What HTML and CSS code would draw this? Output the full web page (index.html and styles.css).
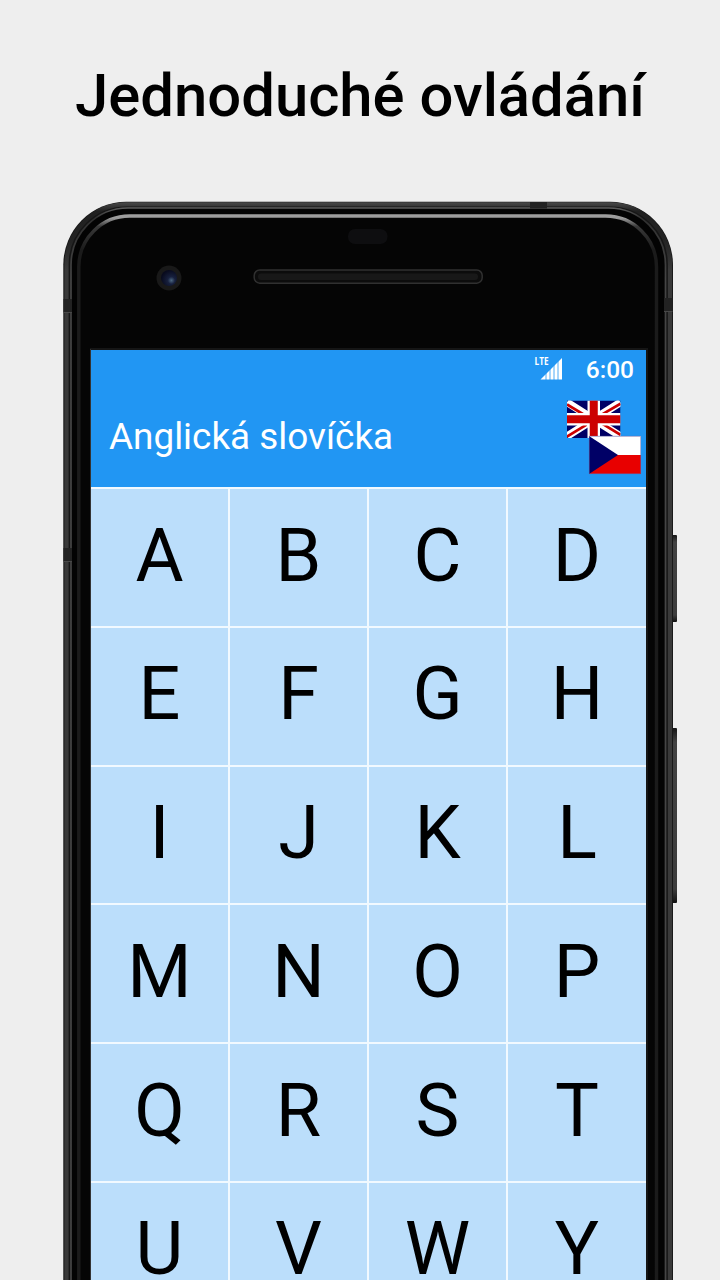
FILE: index.html
```html
<!DOCTYPE html>
<html lang="cs">
<head>
<meta charset="utf-8">
<title>Anglická slovíčka</title>
<link rel="stylesheet" href="styles.css">
</head>
<body>
<h1 class="headline">Jednoduché ovládání</h1>
<main class="phone">
  <svg class="phone-body" width="620" height="1080" viewBox="60 200 620 1080" aria-hidden="true">
    <defs>
      <linearGradient id="rim" gradientUnits="userSpaceOnUse" x1="0" y1="201" x2="0" y2="270">
        <stop offset="0" stop-color="#505050"/><stop offset=".15" stop-color="#202020"/><stop offset=".6" stop-color="#242424"/><stop offset="1" stop-color="#393939"/>
      </linearGradient>
      <linearGradient id="line" gradientUnits="userSpaceOnUse" x1="0" y1="207" x2="0" y2="280">
        <stop offset="0" stop-color="#606060"/><stop offset=".15" stop-color="#303030"/><stop offset="1" stop-color="#444"/>
      </linearGradient>
      <linearGradient id="shine" gradientUnits="userSpaceOnUse" x1="0" y1="214" x2="0" y2="250">
        <stop offset="0" stop-color="#a0a0a0"/><stop offset=".12" stop-color="#999"/><stop offset=".35" stop-color="#383838"/><stop offset="1" stop-color="#1b1b1b"/>
      </linearGradient>
      <linearGradient id="button" x1="0" y1="0" x2="0" y2="1">
        <stop offset="0" stop-color="#151515"/><stop offset=".08" stop-color="#424242"/><stop offset=".92" stop-color="#3c3c3c"/><stop offset="1" stop-color="#111"/>
      </linearGradient>
      <radialGradient id="lens" cx=".65" cy=".65" r=".65">
        <stop offset="0" stop-color="#4b6680"/><stop offset=".35" stop-color="#17203e"/><stop offset="1" stop-color="#080a1d"/>
      </radialGradient>
    </defs>
    <rect x="672" y="535" width="5" height="87" rx="1" fill="url(#button)"/>
    <rect x="672" y="728" width="5" height="175" rx="1" fill="url(#button)"/>
    <rect x="63.3" y="201.8" width="609.7" height="1180" rx="63" fill="#161616"/>
    <rect x="66.5" y="204.4" width="603.5" height="1180" rx="60" fill="none" stroke="url(#rim)" stroke-width="4.2"/>
    <rect x="71" y="208" width="594.5" height="1180" rx="57" fill="#030303" stroke="url(#line)" stroke-width="1.7"/>
    <rect x="78.8" y="216" width="577.7" height="1180" rx="51" fill="#050505" stroke="url(#shine)" stroke-width="3.4"/>
    <path d="M63.5 299h8.500v13h-8.500zM664 298h8.500v13H664zM63.500 548h8.500v13h-8.500zM530 202h17v6.500h-17z" fill="#222"/>
    <path d="M63.500 312.500H72M664 311.500h8.500M63.500 561.500H72" stroke="#484848" stroke-width="1"/>
    <rect x="348" y="229" width="39.500" height="15" rx="7" fill="#0e0e10"/>
    <rect x="254.200" y="270" width="228" height="13.200" rx="5.500" fill="#0c0c0c" stroke="#303030" stroke-width="1.500"/>
    <rect x="258" y="273.500" width="220" height="6.500" rx="3" fill="#181818"/>
    <circle cx="169" cy="278" r="12.500" fill="#191919"/>
    <circle cx="169" cy="278" r="8" fill="url(#lens)"/>
    <path d="M90 349h557v931" fill="none" stroke="#151515" stroke-width="2"/>
    <path d="M90.500 349v931" stroke="#333" stroke-width="1"/>
  </svg>
  <section class="screen">
    <div class="status">
      <svg class="signal" width="29" height="26" viewBox="0 0 29 26" aria-label="LTE">
        <text class="lte" x="0.500" y="10.300" textLength="14" lengthAdjust="spacingAndGlyphs">LTE</text>
        <path d="M6.500 24.500 28 3v21.500z" fill="#fff"/>
        <path d="M12 18v7M16 14v11M20 10v15M24 6v19" stroke="#2196f3" stroke-width=".8"/>
      </svg>
      <time>6:00</time>
    </div>
    <header class="bar">
      <h2>Anglická slovíčka</h2>
      <svg class="flags" width="76" height="76" viewBox="565 399 76 76" aria-label="English – Czech">
        <svg x="567" y="400.500" width="53.500" height="37.500" viewBox="0 0 60 42" preserveAspectRatio="none">
          <path fill="#006" d="M0 0h60v42H0z"/>
          <path d="M0 2l30 19L60 2M0 40l30-19 30 19" fill="none" stroke="#fff" stroke-width="8.500"/>
          <path d="M0 4.500l20 12M60 3.500L37 17M0 40.500L22 27M60 38.500L38 25" stroke="#c00" stroke-width="3"/>
          <path d="M30 0v42M0 21h60" stroke="#fff" stroke-width="14"/>
          <path d="M30 0v42M0 21h60" stroke="#c00" stroke-width="9"/>
        </svg>
        <path fill="#fff" d="M589 436h52v19.500h-52z"/>
        <path fill="#e80000" d="M589 455h52v19h-52z"/>
        <path fill="#006" d="M589 436l29 19-29 19z"/>
        <path d="M589.300 436.300h51.400v37.400h-51.400z" fill="none" stroke="#66a" stroke-width=".6"/>
      </svg>
    </header>
    <div class="letters">
      <span>A</span><span>B</span><span>C</span><span>D</span>
      <span>E</span><span>F</span><span>G</span><span>H</span>
      <span>I</span><span>J</span><span>K</span><span>L</span>
      <span>M</span><span>N</span><span>O</span><span>P</span>
      <span>Q</span><span>R</span><span>S</span><span>T</span>
      <span>U</span><span>V</span><span>W</span><span>Y</span>
    </div>
  </section>
</main>
</body>
</html>
```
FILE: styles.css
```css
* { box-sizing: border-box; }
body {
  margin: 0;
  width: 720px;
  height: 1280px;
  overflow: hidden;
  display: flex;
  flex-direction: column;
  background: #eee;
  font-family: Roboto, "Noto Sans", sans-serif;
}
.headline {
  margin: 0;
  height: 200px;
  flex: none;
  padding-top: 61px;
  text-align: center;
  font-size: 59.8px;
  line-height: 70px;
  font-weight: 500;
  color: #000;
  white-space: nowrap;
}
.phone {
  display: grid;
  width: 620px;
  height: 1080px;
  margin-left: 60px;
}
.phone-body { grid-area: 1 / 1; }
.screen {
  grid-area: 1 / 1;
  width: 555px;
  height: 930px;
  margin: 150px 0 0 31px;
  background: #2196f3;
  color: #fff;
}
.status {
  display: flex;
  height: 36px;
  justify-content: flex-end;
  gap: 23px;
  padding: 5px 12px 0 0;
}
.signal { overflow: visible; }
.status time {
  font-size: 24.5px;
  line-height: 29px;
  font-weight: 500;
}
.lte {
  font: 700 11px "Open Sans", sans-serif;
  fill: #fff;
}
.bar {
  display: flex;
  height: 101px;
  justify-content: space-between;
  padding: 13px 5px 0 18px;
}
.bar h2 {
  margin: 0;
  padding-top: 16px;
  font-size: 36.9px;
  line-height: 44px;
  font-weight: 400;
}
.letters {
  display: grid;
  grid-template-columns: 137px 137px 137px 138px;
  grid-template-rows: repeat(5, 136.75px) 99.25px;
  gap: 2px;
  padding-top: 2px;
  background: #f1f9ff;
}
.letters span {
  display: flex;
  justify-content: center;
  padding-top: 23.5px;
  background: #bbdefb;
  color: #000;
  font-size: 73.7px;
  line-height: 87px;
}
```
